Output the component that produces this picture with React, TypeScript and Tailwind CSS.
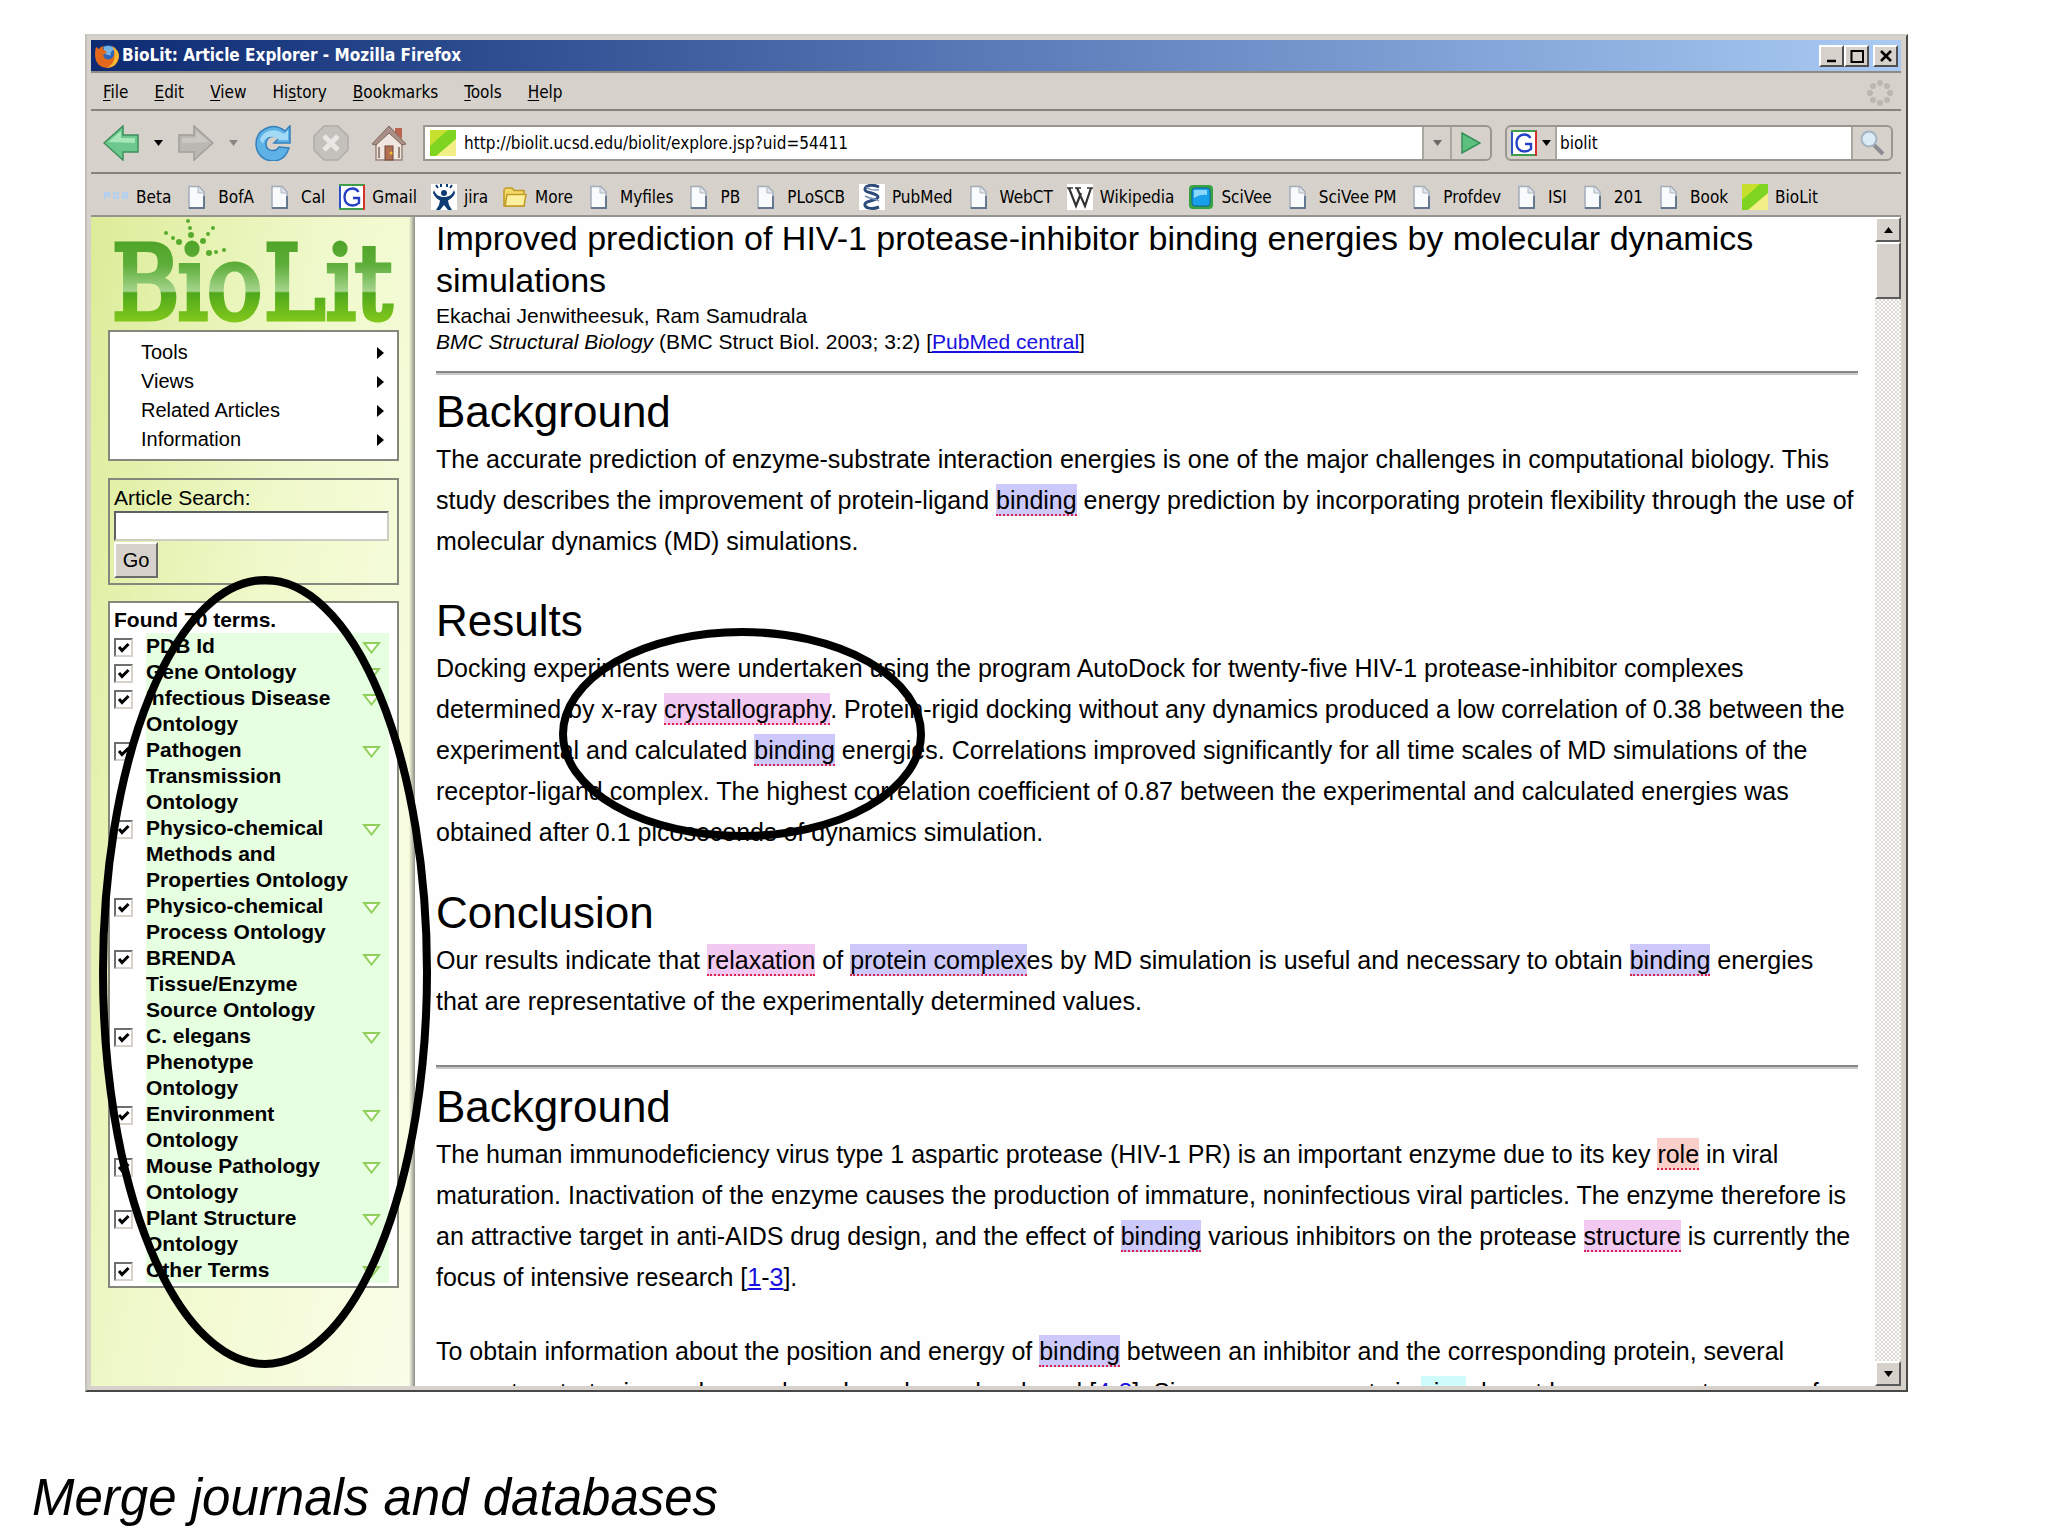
import { useState } from "react";
import type { ReactNode } from "react";

const MENU = [
  ["", "F", "ile"],
  ["", "E", "dit"],
  ["", "V", "iew"],
  ["Hi", "s", "tory"],
  ["", "B", "ookmarks"],
  ["", "T", "ools"],
  ["", "H", "elp"],
];

const BOOKMARKS = [
  { label: "Beta", icon: "pdb" },
  { label: "BofA", icon: "page" },
  { label: "Cal", icon: "page" },
  { label: "Gmail", icon: "google" },
  { label: "jira", icon: "jira" },
  { label: "More", icon: "folder" },
  { label: "Myfiles", icon: "page" },
  { label: "PB", icon: "page" },
  { label: "PLoSCB", icon: "page" },
  { label: "PubMed", icon: "pubmed" },
  { label: "WebCT", icon: "page" },
  { label: "Wikipedia", icon: "wiki" },
  { label: "SciVee", icon: "scivee" },
  { label: "SciVee PM", icon: "page" },
  { label: "Profdev", icon: "page" },
  { label: "ISI", icon: "page" },
  { label: "201", icon: "page" },
  { label: "Book", icon: "page" },
  { label: "BioLit", icon: "biolit" },
];

const SIDE_LINKS = ["Tools", "Views", "Related Articles", "Information"];

const TERMS = [
  ["PDB Id"],
  ["Gene Ontology"],
  ["Infectious Disease", "Ontology"],
  ["Pathogen", "Transmission", "Ontology"],
  ["Physico-chemical", "Methods and", "Properties Ontology"],
  ["Physico-chemical", "Process Ontology"],
  ["BRENDA", "Tissue/Enzyme", "Source Ontology"],
  ["C. elegans", "Phenotype", "Ontology"],
  ["Environment", "Ontology"],
  ["Mouse Pathology", "Ontology"],
  ["Plant Structure", "Ontology"],
  ["Other Terms"],
];

function BioLitIcon() {
  return (
    <svg viewBox="0 0 26 26" className="size-[26px] shrink-0" aria-hidden="true">
      <rect width="26" height="26" fill="#8fd62b" />
      <path d="M0 0H20L0 17Z" fill="#c5e02e" />
      <path d="M26 6V26H3Z" fill="#f2ef86" />
      <path d="M26 0V9L6 26H0V16L18 0Z" fill="#7fd321" />
    </svg>
  );
}

function GoogleIcon() {
  return (
    <svg viewBox="0 0 26 26" className="size-[26px] shrink-0" aria-hidden="true">
      <rect width="26" height="26" fill="#fff" />
      <path d="M1 26V1" stroke="#2b50c8" strokeWidth="2" />
      <path d="M0 1H26M0 25H26" stroke="#3f9d4a" strokeWidth="2" />
      <path d="M25 1V26" stroke="#d8322c" strokeWidth="2" />
      <path d="M19.500 8C18 5.500 16 4.500 13.500 4.500C8.500 4.500 5.500 8 5.500 13C5.500 18 8.500 21.500 13.500 21.500C16.500 21.500 18.500 20.500 20 19V14H14" fill="none" stroke="#2440c4" strokeWidth="2.400" />
    </svg>
  );
}

function BookmarkIcon({ kind }: { kind: string }) {
  if (kind === "google") return <GoogleIcon />;
  if (kind === "biolit") return <BioLitIcon />;
  return (
    <svg viewBox="0 0 26 26" className="size-[26px] shrink-0" aria-hidden="true">
      {kind === "page" && (
        <>
          <path d="M4 2.500H14L19 8V24H4Z" fill="#f8fafc" stroke="#a3acb9" strokeWidth="1.500" />
          <path d="M4 24H19V12" fill="none" stroke="#64788f" strokeWidth="2" />
          <path d="M13 3V9H19" fill="#dfe4ea" stroke="#b0b8c3" />
        </>
      )}
      {kind === "pdb" && (
        <g fill="none" stroke="#b4d0f0" strokeWidth="2">
          <path d="M2 15V9H6V12H2M11 9V14H15V9H11M20 9V14H24V9H20M20 11.500H24" />
        </g>
      )}
      {kind === "jira" && (
        <>
          <rect width="26" height="26" fill="#fff" />
          <g fill="#0f3d73">
            <circle cx="13" cy="9" r="3" />
            <path d="M3 6C5 11 8 13 13 13S21 11 23 6L24 9C22 14 19 15 17 16.500L18 21L21 26H17L13 21L9 26H5L8 21L9 16.500C6 15 4 13 2 9Z" />
            <path d="M5 1L7 4M10 0V3M16 0V3M21 1L19 4" stroke="#0f3d73" strokeWidth="2" />
          </g>
        </>
      )}
      {kind === "folder" && (
        <>
          <path d="M2 22V5.500L4 4H10L12 6.500H22V22Z" fill="#f5d968" stroke="#c09a24" strokeWidth="1.500" />
          <path d="M3 22L5 10.500H24L22 22Z" fill="#fdf1a0" stroke="#c09a24" strokeWidth="1.500" />
        </>
      )}
      {kind === "pubmed" && (
        <>
          <rect width="26" height="26" fill="#fff" />
          <path d="M20 3C14 0 7 1 6 5S19 9 19 13S7 16 6 20S13 26 20 23" fill="none" stroke="#2c4a7a" strokeWidth="3" />
          <path d="M7 3C12 7 16 6 20 6M6 12C11 15 16 14 20 17" fill="none" stroke="#7b91b5" strokeWidth="1.500" />
        </>
      )}
      {kind === "wiki" && (
        <>
          <rect width="26" height="26" fill="#fff" />
          <path d="M2 4L9 22L14 9M10 4L18 22L24 4" fill="none" stroke="#333" strokeWidth="2.200" />
          <path d="M0 4H6M8 4H14M20 4H26" stroke="#333" strokeWidth="1.400" />
        </>
      )}
      {kind === "scivee" && (
        <>
          <rect x="1" y="1" width="24" height="24" rx="4" fill="#36a344" />
          <rect x="4" y="4" width="18" height="18" rx="3" fill="#18a0ea" stroke="#155f9c" />
          <path d="M6 6H19V11Q12 10 6 14Z" fill="#8bd6fb" />
        </>
      )}
    </svg>
  );
}

function FirefoxIcon() {
  return (
    <svg viewBox="0 0 26 26" className="size-[26px] shrink-0" aria-hidden="true">
      <circle cx="14" cy="12" r="10" fill="#2f66b8" />
      <path d="M10 4C14 2 19 3 21 7C18 7 16 9 17 12C14 13 11 11 10 9Z" fill="#74b4e6" />
      <path d="M2 4L5 6Q7 3 10 3Q8 5 10 7L13 9Q11 11 9 12Q10 16 14 16.500Q19 16 20 12Q21 7 18 3Q25 7 25 14Q23 25 13 25Q2 24 1 13Q1 7 2 4Z" fill="#e2691c" />
      <path d="M18 3Q25 7 25 14Q23 24 13 25Q21 20 20.500 13Q21 7 18 3Z" fill="#f7b733" />
    </svg>
  );
}

function Caret({ className }: { className: string }) {
  return (
    <svg viewBox="0 0 9 6" className={`h-[6px] w-[9px] ${className}`} aria-hidden="true">
      <path d="M0 0H9L4.500 6Z" fill="currentColor" />
    </svg>
  );
}

function TitleButton({ label, children }: { label: string; children: ReactNode }) {
  return (
    <button
      type="button"
      aria-label={label}
      className="flex h-[22px] w-[25px] items-center justify-center border-2 border-t-white border-r-[#505050] border-b-[#505050] border-l-white bg-[#d6d2cb]"
    >
      <svg viewBox="0 0 16 16" className="size-4" fill="none" stroke="#000" strokeWidth="2.500" aria-hidden="true">
        {children}
      </svg>
    </button>
  );
}

function TitleBar() {
  return (
    <div className="flex h-[31px] items-center bg-linear-to-r from-[#0d2a72] via-[#5a7ab8] to-[#a9cbf3] px-[3px]">
      <FirefoxIcon />
      <h1 className="flex-1 pl-[2px] text-[17px] font-bold text-white">BioLit: Article Explorer - Mozilla Firefox</h1>
      <div className="flex">
        <TitleButton label="Minimize">
          <path d="M3 13H12" />
        </TitleButton>
        <TitleButton label="Maximize">
          <path d="M2 3H14M2.500 2V14H14V2" strokeWidth="2" />
        </TitleButton>
      </div>
      <div className="ml-1">
        <TitleButton label="Close">
          <path d="M3 3L13 13M13 3L3 13" />
        </TitleButton>
      </div>
    </div>
  );
}

function MenuBar() {
  return (
    <nav className="flex h-[40px] items-center border-t-2 border-b-2 border-t-[#8e8a84] border-b-[#85817b] pt-[4px] pr-[8px] pl-[12px]">
      <div className="flex flex-1 gap-[26px]">
        {MENU.map(([pre, key, post]) => (
          <button key={key + post} type="button">
            {pre}
            <u className="underline-offset-2">{key}</u>
            {post}
          </button>
        ))}
      </div>
      <svg viewBox="0 0 26 26" className="size-[26px]" fill="#bab6b0" aria-hidden="true">
        <circle cx="13" cy="3" r="3" />
        <circle cx="20" cy="6" r="3" />
        <circle cx="23" cy="13" r="3" />
        <circle cx="20" cy="20" r="3" />
        <circle cx="13" cy="23" r="3" />
        <circle cx="6" cy="20" r="3" />
        <circle cx="3" cy="13" r="3" />
        <circle cx="6" cy="6" r="3" />
      </svg>
    </nav>
  );
}

function NavBar() {
  const [url, setUrl] = useState("http://biolit.ucsd.edu/biolit/explore.jsp?uid=54411");
  const [query, setQuery] = useState("biolit");

  return (
    <div className="flex h-[63px] items-center border-b-2 border-b-[#85817b] pt-[2px] pr-[8px] pl-[12px]">
      <button type="button" aria-label="Back">
        <svg viewBox="0 0 36 36" className="size-9" aria-hidden="true">
          <path d="M1 18L20 1V10H35V27H20V35Z" fill="#6cc88c" stroke="#3d8f5c" strokeWidth="1.500" />
          <path d="M5 17L18 6V13H32V18Z" fill="#a6e6b8" />
        </svg>
      </button>
      <button type="button" aria-label="Back history" className="ml-[15px]">
        <Caret className="text-black" />
      </button>
      <button type="button" aria-label="Forward" className="ml-[15px]">
        <svg viewBox="0 0 36 36" className="size-9" aria-hidden="true">
          <path d="M35 18L16 1V10H1V27H16V35Z" fill="#bbb8b3" stroke="#a19e9a" strokeWidth="1.500" />
          <path d="M31 17L18 6V13H4V18Z" fill="#cbc8c3" />
        </svg>
      </button>
      <button type="button" aria-label="Forward history" className="ml-[15px]">
        <Caret className="text-[#8a8782]" />
      </button>
      <button type="button" aria-label="Reload" className="ml-[17px]">
        <svg viewBox="0 0 36 36" className="size-9" aria-hidden="true">
          <path d="M35 1V18H19L24 13C19 9 11 12 11 19C11 26 20 28 24 22L34 23C31 32 25 36 18 36C8 36 1 28 1 19C1 5 17 -4 30 6Z" fill="#5fb2e6" stroke="#3380bd" strokeWidth="1.500" />
          <path d="M5 15C8 5 20 2 29 9L33 5V15H24C18 9 9 12 8 19Z" fill="#a3daf6" />
        </svg>
      </button>
      <button type="button" aria-label="Stop" className="ml-[22px]">
        <svg viewBox="0 0 36 36" className="size-9" aria-hidden="true">
          <path d="M11 1H25L35 11V25L25 35H11L1 25V11Z" fill="#c4c1bc" stroke="#b0ada8" strokeWidth="1.500" />
          <path d="M11 11L25 25M25 11L11 25" stroke="#e9e7e4" strokeWidth="5" />
        </svg>
      </button>
      <button type="button" aria-label="Home" className="ml-[22px]">
        <svg viewBox="0 0 36 36" className="size-9" aria-hidden="true">
          <path d="M24 3H31V14L24 8Z" fill="#bd6352" />
          <path d="M5 17L18 4L31 17V35H5Z" fill="#efe6e0" stroke="#9b857b" strokeWidth="1.500" />
          <path d="M1 19L18 1L35 19L31 20L18 8L5 20Z" fill="#a98f86" stroke="#80675f" />
          <rect x="14" y="21" width="8" height="14" fill="#b06f50" stroke="#704838" />
          <path d="M8 22V33M28 22V33" stroke="#9b857b" strokeWidth="2" />
          <circle cx="20" cy="28" r="1.500" fill="#f2c02c" />
        </svg>
      </button>

      <div className="ml-[16px] flex h-[36px] flex-1 overflow-hidden rounded-r-md border-2 border-[#9a9791]">
        <div className="flex flex-1 items-center bg-white pl-[5px]">
          <BioLitIcon />
          <input
            aria-label="Location"
            value={url}
            onChange={(e) => setUrl(e.target.value)}
            className="min-w-0 flex-1 bg-white pt-[3px] pl-[8px] outline-none"
          />
        </div>
        <button type="button" aria-label="Show history" className="flex w-[28px] items-center justify-center border-l-2 border-[#aaa7a1]">
          <Caret className="text-[#6d6a66]" />
        </button>
        <button type="button" aria-label="Go" className="flex w-[40px] items-center justify-center border-l-2 border-[#aaa7a1]">
          <svg viewBox="0 0 20 22" className="h-[22px] w-5" aria-hidden="true">
            <path d="M1 1L19 11L1 21Z" fill="#5cc07e" stroke="#37905a" strokeWidth="1.500" />
          </svg>
        </button>
      </div>

      <div className="ml-[13px] flex h-[36px] w-[388px] overflow-hidden rounded-md border-2 border-[#9a9791]">
        <button type="button" aria-label="Search engine" className="flex w-[48px] items-center gap-[5px] pl-[4px]">
          <GoogleIcon />
          <Caret className="text-black" />
        </button>
        <input
          aria-label="Search"
          value={query}
          onChange={(e) => setQuery(e.target.value)}
          className="min-w-0 flex-1 border-x-2 border-[#aaa7a1] bg-white pt-[3px] pl-[3px] outline-none"
        />
        <button type="button" aria-label="Run search" className="flex w-[38px] items-center justify-center">
          <svg viewBox="0 0 26 26" className="size-[26px]" aria-hidden="true">
            <path d="M15 15L24 24" stroke="#8b8d93" strokeWidth="4" />
            <circle cx="10" cy="9" r="7.500" fill="#dcecf6" stroke="#a5b3c0" strokeWidth="2" />
          </svg>
        </button>
      </div>
    </div>
  );
}

function BookmarkBar() {
  return (
    <div className="flex h-[43px] items-center gap-[14px] border-b-2 border-b-[#96938c] pt-[4px] pl-[12px]">
      {BOOKMARKS.map((b) => (
        <a key={b.label} href="#" className="flex shrink-0 items-center gap-[7px]">
          <BookmarkIcon kind={b.icon} />
          <span className="pt-[2px]">{b.label}</span>
        </a>
      ))}
    </div>
  );
}

function Logo() {
  return (
    <svg viewBox="0 0 291 113" className="block h-[113px] w-[291px]" role="img" aria-label="BioLit">
      <defs>
        <linearGradient id="leaf" gradientUnits="userSpaceOnUse" x1="0" y1="24" x2="0" y2="105">
          <stop offset="0" stopColor="#4ea427" />
          <stop offset="0.300" stopColor="#5eae3a" />
          <stop offset="0.620" stopColor="#a5d48c" />
          <stop offset="0.640" stopColor="#4fa81c" />
          <stop offset="1" stopColor="#82c81c" />
        </linearGradient>
      </defs>
      <g fill="url(#leaf)" stroke="url(#leaf)" strokeWidth="5" fontSize="102" fontFamily="'DejaVu Serif Condensed', 'DejaVu Serif', serif">
        <text x="4" y="102">B</text>
        <text x="70" y="102">i</text>
        <text x="99" y="102">o</text>
        <text x="156" y="102">L</text>
        <text x="218" y="102">i</text>
        <text x="247" y="102">t</text>
      </g>
      <g fill="#58ab2f">
        <circle cx="80" cy="4" r="2" />
        <circle cx="82" cy="11" r="2" />
        <circle cx="83" cy="18" r="3" />
        <circle cx="58" cy="16" r="2" />
        <circle cx="65" cy="21" r="2" />
        <circle cx="71" cy="25" r="3" />
        <circle cx="105" cy="11" r="2" />
        <circle cx="100" cy="17" r="2" />
        <circle cx="95" cy="24" r="3" />
        <circle cx="101" cy="36" r="3" />
        <circle cx="108" cy="35" r="2" />
        <circle cx="116" cy="33" r="2" />
      </g>
    </svg>
  );
}

function TermRow({ lines }: { lines: string[] }) {
  const [on, setOn] = useState(true);
  return (
    <li className="flex">
      <label className="flex flex-1">
        <span className="relative mt-[5px] mr-[13px] size-[19px]">
          <input
            type="checkbox"
            checked={on}
            onChange={(e) => setOn(e.target.checked)}
            className="block size-[19px] appearance-none border-2 border-t-[#6e6e6e] border-r-[#d6d2cb] border-b-[#d6d2cb] border-l-[#6e6e6e] bg-white"
          />
          {on && (
            <svg viewBox="0 0 19 19" className="pointer-events-none absolute inset-0" aria-hidden="true">
              <path d="M5 9L8 12.500L14.500 6" fill="none" stroke="#000" strokeWidth="3" />
            </svg>
          )}
        </span>
        <span className="flex-1 bg-[#e6ffe1]">
          {lines.map((line) => (
            <span key={line} className="block">
              {line}
            </span>
          ))}
        </span>
      </label>
      <button type="button" aria-label={`Expand ${lines.join(" ")}`} className="flex items-start bg-[#e6ffe1] pt-[9px] pr-[8px]">
        <svg viewBox="0 0 19 12" className="h-[12px] w-[19px]" aria-hidden="true">
          <path d="M2 1H17L9.500 10.500Z" fill="#fbfff6" stroke="#8fcf5a" strokeWidth="2" />
        </svg>
      </button>
    </li>
  );
}

function Sidebar() {
  return (
    <aside className="flex w-[324px] shrink-0 bg-linear-100 from-[#dcec98] via-[#f0f9cb] via-45% to-[#fafee9] text-[20px]">
      <div className="flex-1 pl-[17px]">
        <Logo />
        <ul className="w-[291px] border-2 border-[#84887c] bg-white pt-[6px] pb-[5px]">
          {SIDE_LINKS.map((name) => (
            <li key={name}>
              <a href="#" className="flex items-center justify-between pr-[13px] pl-[31px] leading-[29px]">
                {name}
                <svg viewBox="0 0 7 12" className="h-[12px] w-[7px]" aria-hidden="true">
                  <path d="M0 0L7 6L0 12Z" />
                </svg>
              </a>
            </li>
          ))}
        </ul>
        <form className="mt-[17px] w-[291px] border-2 border-[#84887c] px-[4px] pt-[4px] pb-[5px]" onSubmit={(e) => e.preventDefault()}>
          <label htmlFor="article-search" className="block text-[21px] leading-[27px]">
            Article Search:
          </label>
          <input
            id="article-search"
            className="block h-[30px] w-[275px] border-2 border-t-[#5c6166] border-r-[#cfccc4] border-b-[#cfccc4] border-l-[#5c6166] bg-white outline-none"
          />
          <button
            type="submit"
            className="mt-[1px] block h-[36px] w-[44px] border-2 border-t-white border-r-[#6b6b6b] border-b-[#6b6b6b] border-l-white bg-[#d6d2cb]"
          >
            Go
          </button>
        </form>
        <section className="mt-[16px] w-[291px] border-2 border-[#84887c] bg-white pt-[4px] pr-[8px] pb-[3px] pl-[4px] text-[21px] leading-[26px] font-bold">
          <h2>Found 70 terms.</h2>
          <ul>
            {TERMS.map((lines) => (
              <TermRow key={lines.join(" ")} lines={lines} />
            ))}
          </ul>
        </section>
      </div>
      <div className="w-[6px] bg-linear-to-r from-transparent to-[#8d8f86]" />
    </aside>
  );
}

function Term({ tone, children }: { tone: string; children: ReactNode }) {
  return <mark className={`border-b-2 border-dotted border-[#d8234e] pt-[2px] text-black ${tone}`}>{children}</mark>;
}

const BLUE = "bg-[#cdcafb]";
const PINK = "bg-[#f1c9f1]";

function Heading({ children }: { children: ReactNode }) {
  return <h3 className="text-[44px] leading-[54px]">{children}</h3>;
}

function Rule() {
  return <hr className="h-[4px] border-t-2 border-b-2 border-t-[#888] border-b-[#c9c9c9]" />;
}

function Article() {
  return (
    <article className="min-w-0 flex-1 overflow-hidden bg-[#fefefe] pr-[17px] pl-[21px] text-[25px] leading-[41px] whitespace-nowrap">
      <h2 className="text-[34px] leading-[42px]">
        Improved prediction of HIV-1 protease-inhibitor binding energies by molecular dynamics
        <br />
        simulations
      </h2>
      <div className="mt-[2px] mb-[16px] text-[21px] leading-[26px]">
        <p>Ekachai Jenwitheesuk, Ram Samudrala</p>
        <p>
          <i>BMC Structural Biology</i> (BMC Struct Biol. 2003; 3:2) [
          <a href="#" className="text-[#1a10e0] underline">
            PubMed central
          </a>
          ]
        </p>
      </div>
      <Rule />
      <section className="mt-[10px]">
        <Heading>Background</Heading>
        <p>
          The accurate prediction of enzyme-substrate interaction energies is one of the major challenges in computational biology. This
          <br />
          study describes the improvement of protein-ligand <Term tone={BLUE}>binding</Term> energy prediction by incorporating protein flexibility through the use of
          <br />
          molecular dynamics (MD) simulations.
        </p>
      </section>
      <section className="mt-[32px]">
        <Heading>Results</Heading>
        <p>
          Docking experiments were undertaken using the program AutoDock for twenty-five HIV-1 protease-inhibitor complexes
          <br />
          determined by x-ray <Term tone={PINK}>crystallography</Term>. Protein-rigid docking without any dynamics produced a low correlation of 0.38 between the
          <br />
          experimental and calculated <Term tone={BLUE}>binding</Term> energies. Correlations improved significantly for all time scales of MD simulations of the
          <br />
          receptor-ligand complex. The highest correlation coefficient of 0.87 between the experimental and calculated energies was
          <br />
          obtained after 0.1 picoseconds of dynamics simulation.
        </p>
      </section>
      <section className="mt-[33px] mb-[43px]">
        <Heading>Conclusion</Heading>
        <p>
          Our results indicate that <Term tone={PINK}>relaxation</Term> of <Term tone={BLUE}>protein complex</Term>es by MD simulation is useful and necessary to obtain{" "}
          <Term tone={BLUE}>binding</Term> energies
          <br />
          that are representative of the experimentally determined values.
        </p>
      </section>
      <Rule />
      <section className="mt-[11px]">
        <Heading>Background</Heading>
        <p>
          The human immunodeficiency virus type 1 aspartic protease (HIV-1 PR) is an important enzyme due to its key <Term tone="bg-[#fbcfc9]">role</Term> in viral
          <br />
          maturation. Inactivation of the enzyme causes the production of immature, noninfectious viral particles. The enzyme therefore is
          <br />
          an attractive target in anti-AIDS drug design, and the effect of <Term tone={BLUE}>binding</Term> various inhibitors on the protease{" "}
          <Term tone={PINK}>structure</Term> is currently the
          <br />
          focus of intensive research [
          <a href="#" className="text-[#1a10e0] underline">
            1
          </a>
          -
          <a href="#" className="text-[#1a10e0] underline">
            3
          </a>
          ].
        </p>
        <p className="mt-[33px]">
          To obtain information about the position and energy of <Term tone={BLUE}>binding</Term> between an inhibitor and the corresponding protein, several
          <br />
          computer strategies and procedures have been developed [
          <a href="#" className="text-[#1a10e0] underline">
            4-8
          </a>
          ]. Since measurements in <Term tone="bg-[#d0fbfb]">vivo</Term> do not have a current source of
        </p>
      </section>
    </article>
  );
}

function ScrollBar() {
  return (
    <div className="flex w-[26px] shrink-0 flex-col bg-[repeating-conic-gradient(#dedad6_0_25%,#fbfafa_0_50%)] bg-[length:4px_4px]">
      <button type="button" aria-label="Scroll up" className="flex h-[25px] items-center justify-center border-2 border-t-white border-r-[#5a5a5a] border-b-[#5a5a5a] border-l-white bg-[#d6d2cb]">
        <Caret className="rotate-180 text-black" />
      </button>
      <div className="h-[57px] border-2 border-t-white border-r-[#5a5a5a] border-b-[#5a5a5a] border-l-white bg-[#d6d2cb]" />
      <div className="flex-1" />
      <button type="button" aria-label="Scroll down" className="flex h-[25px] items-center justify-center border-2 border-t-white border-r-[#5a5a5a] border-b-[#5a5a5a] border-l-white bg-[#d6d2cb]">
        <Caret className="text-black" />
      </button>
    </div>
  );
}

export default function App() {
  return (
    <div className="relative flex h-screen flex-col overflow-hidden bg-[#fefefe] pt-[34px] font-['Liberation_Sans',Arial,sans-serif] text-black">
      <div className="mr-[140px] ml-[85px] flex min-h-0 flex-1 flex-col border-2 border-t-[#d0cdc6] border-r-[#484848] border-b-[#484848] border-l-[#c4c1ba] bg-[#d6d2cb] pr-[5px] pb-[4px] pl-[4px]">
        <div className="bg-[#d6d2cb] pt-[4px] font-['DejaVu_Sans_Condensed','DejaVu_Sans',sans-serif] text-[17px]">
          <TitleBar />
          <MenuBar />
          <NavBar />
          <BookmarkBar />
        </div>
        <div className="flex min-h-0 flex-1 overflow-hidden">
          <Sidebar />
          <Article />
          <ScrollBar />
        </div>
      </div>

      <p className="mt-[76px] mb-[8px] pl-[32px] text-[51px] leading-[60px] italic">Merge journals and databases</p>

      {/* callout rings over the window */}
      <svg className="pointer-events-none absolute top-[576px] left-[99px] h-[793px] w-[332px]" viewBox="0 0 332 793" fill="none" aria-hidden="true">
        <ellipse cx="166" cy="396" rx="162" ry="392" stroke="#000" strokeWidth="8" />
      </svg>
      <svg className="pointer-events-none absolute top-[627px] left-[559px] h-[214px] w-[367px]" viewBox="0 0 367 214" fill="none" aria-hidden="true">
        <ellipse cx="183" cy="107" rx="179" ry="102" stroke="#000" strokeWidth="8" />
      </svg>
    </div>
  );
}
